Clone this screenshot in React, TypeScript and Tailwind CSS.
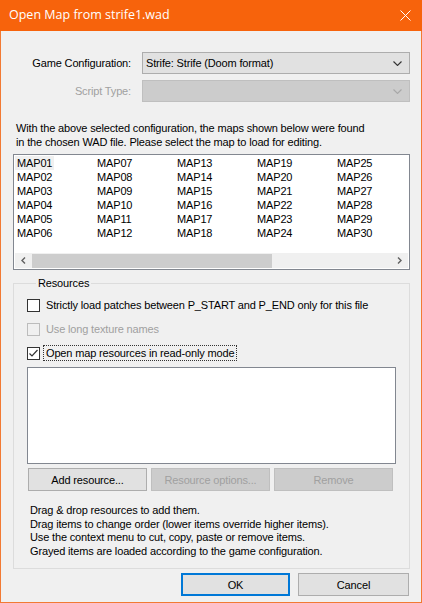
import React from "react";

const maps = Array.from({ length: 30 }, (_, i) => `MAP${String(i + 1).padStart(2, "0")}`);

function Chevron({ color }: { color: string }) {
  return (
    <svg width="9" height="5" viewBox="0 0 9 5" className="mr-[7px]">
      <polyline points="0.5,0.5 4.5,4.5 8.5,0.5" fill="none" stroke={color} strokeWidth="1.1" />
    </svg>
  );
}

function Combo({ text, disabled }: { text?: string; disabled?: boolean }) {
  return (
    <div
      className={
        disabled
          ? "flex-1 h-[22px] flex items-center justify-between border border-[#bfbfbf] bg-[#cccccc]"
          : "flex-1 h-[22px] flex items-center justify-between border border-[#adadad] bg-[#e1e1e1]"
      }
    >
      <span className="pl-[3px]">{text}</span>
      <Chevron color={disabled ? "#a8a8a8" : "#333333"} />
    </div>
  );
}

function Check({ label, checked, disabled, focus }: { label: string; checked?: boolean; disabled?: boolean; focus?: boolean }) {
  return (
    <div className="flex items-center h-[14px]">
      <div
        className={
          disabled
            ? "w-[13px] h-[13px] border border-[#bcbcbc] bg-[#f0f0f0]"
            : "w-[13px] h-[13px] border border-[#333333] bg-white flex items-center justify-center"
        }
      >
        {checked && (
          <svg width="11" height="11" viewBox="0 0 11 11">
            <polyline points="1.5,5.5 4,8 9.5,2" fill="none" stroke="#333333" strokeWidth="1.2" />
          </svg>
        )}
      </div>
      <span
        className={
          focus
            ? "ml-[3px] px-[2px] border border-dotted border-[#333] leading-[14px]"
            : disabled
            ? "ml-[6px] text-[#a0a0a0]"
            : "ml-[6px]"
        }
      >
        {label}
      </span>
    </div>
  );
}

function Btn({ children, disabled, primary, w }: { children: React.ReactNode; disabled?: boolean; primary?: boolean; w: string }) {
  let cls = "h-[23px] flex items-center justify-center border ";
  if (primary) cls += "border-2 border-[#0078d7] bg-[#e1e1e1] ";
  else if (disabled) cls += "border-[#bfbfbf] bg-[#cccccc] text-[#a0a0a0] ";
  else cls += "border-[#adadad] bg-[#e1e1e1] ";
  return <div className={cls + w}>{children}</div>;
}

export default function App() {
  return (
    <div
      className="w-[422px] h-[603px] flex flex-col border-x border-b border-[#f27a33] bg-[#f0f0f0] text-[11px] leading-[14px] tracking-[-0.15px] text-black"
      style={{ fontFamily: '"Liberation Sans", Arial, sans-serif' }}
    >
      {/* title bar */}
      <div className="h-[31px] bg-[#f7630c] flex items-center justify-between -mx-px">
        <span className="pl-[9px] text-white text-[12.5px] tracking-normal pb-[1px]" style={{ fontFamily: '"Open Sans", "Noto Sans", sans-serif' }}>
          Open Map from strife1.wad
        </span>
        <svg width="11" height="11" viewBox="0 0 11 11" className="mr-[11px]">
          <path d="M0.5 0.5 L10.5 10.5 M10.5 0.5 L0.5 10.5" stroke="white" strokeWidth="1" />
        </svg>
      </div>

      <div className="flex-1 flex flex-col pl-[12px] pr-[11px]">
        <div className="flex items-center mt-[21px]">
          <span className="w-[118px] text-right">Game Configuration:</span>
          <div className="w-[11px]" />
          <Combo text="Strife: Strife (Doom format)" />
        </div>
        <div className="flex items-center mt-[6px]">
          <span className="w-[118px] text-right text-[#a0a0a0]">Script Type:</span>
          <div className="w-[11px]" />
          <Combo disabled />
        </div>

        <p className="mt-[19px] pl-[3px]">
          With the above selected configuration, the maps shown below were found
          <br />
          in the chosen WAD file. Please select the map to load for editing.
        </p>

        {/* map list */}
        <div className="mt-[5px] h-[116px] border border-[#828790] bg-white flex flex-col">
          <div className="flex-1 grid grid-flow-col grid-rows-[repeat(6,14px)] grid-cols-[80px_80px_80px_80px_80px] content-start pt-[1px] pl-[1px]">
            {maps.map((m, i) => (
              <div key={m} className="h-[14px] flex">
                <span className={i === 0 ? "bg-[#f0f0f0] px-[2px]" : "px-[2px]"}>{m}</span>
              </div>
            ))}
          </div>
          <div className="h-[15px] mx-[1px] mb-[1px] bg-[#f0f0f0] flex items-center">
            <div className="w-[17px] flex justify-center">
              <svg width="5" height="7" viewBox="0 0 5 7">
                <polyline points="4,0.5 1,3.5 4,6.5" fill="none" stroke="#606060" strokeWidth="1.4" />
              </svg>
            </div>
            <div className="w-[240px] h-[14px] bg-[#cdcdcd]" />
            <div className="flex-1" />
            <div className="w-[17px] flex justify-center">
              <svg width="5" height="7" viewBox="0 0 5 7">
                <polyline points="1,0.5 4,3.5 1,6.5" fill="none" stroke="#606060" strokeWidth="1.4" />
              </svg>
            </div>
          </div>
        </div>

        {/* resources group */}
        <fieldset className="mt-[6px] border border-[#dcdcdc] px-[13px] pb-[10px]">
          <legend className="ml-[9px] px-[2px]">Resources</legend>
          <div className="flex flex-col gap-[10px] mt-[8px]">
            <Check label="Strictly load patches between P_START and P_END only for this file" />
            <Check label="Use long texture names" disabled />
            <Check label="Open map resources in read-only mode" checked focus />
          </div>
          <div className="mt-[7px] h-[97px] border border-[#828790] bg-white" />
          <div className="flex gap-[4px] mt-[4px] pl-[1px]">
            <Btn w="w-[119px]">Add resource...</Btn>
            <Btn w="w-[119px]" disabled>Resource options...</Btn>
            <Btn w="w-[119px]" disabled>Remove</Btn>
          </div>
          <p className="mt-[13px] pl-[3px] leading-[13.5px]">
            Drag &amp; drop resources to add them.
            <br />
            Drag items to change order (lower items override higher items).
            <br />
            Use the context menu to cut, copy, paste or remove items.
            <br />
            Grayed items are loaded according to the game configuration.
          </p>
        </fieldset>

        <div className="flex justify-end gap-[8px] mt-[4px] pr-[1px]">
          <Btn w="w-[109px]" primary>OK</Btn>
          <Btn w="w-[111px]">Cancel</Btn>
        </div>
      </div>
    </div>
  );
}
